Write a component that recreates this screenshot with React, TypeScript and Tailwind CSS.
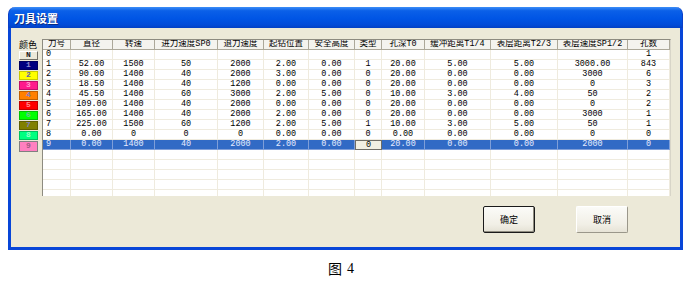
import React from "react";

const COLS =
  "grid grid-cols-[28px_42px_42px_63px_46px_45px_46px_27px_43px_66px_67px_70px_42px]";

const HEADERS = [
  "刀号",
  "直径",
  "转速",
  "进刀速度SP0",
  "退刀速度",
  "起钻位置",
  "安全高度",
  "类型",
  "孔深T0",
  "缓冲距离T1/4",
  "表层距离T2/3",
  "表层速度SP1/2",
  "孔数",
];

const ROWS: string[][] = [
  ["0", "", "", "", "", "", "", "", "", "", "", "", "1"],
  ["1", "52.00", "1500", "50", "2000", "2.00", "0.00", "1", "20.00", "5.00", "5.00", "3000.00", "843"],
  ["2", "90.00", "1400", "40", "2000", "3.00", "0.00", "0", "20.00", "0.00", "0.00", "3000", "6"],
  ["3", "18.50", "1400", "40", "1200", "0.00", "0.00", "0", "20.00", "0.00", "0.00", "0", "3"],
  ["4", "45.50", "1400", "60", "3000", "2.00", "5.00", "0", "10.00", "3.00", "4.00", "50", "2"],
  ["5", "109.00", "1400", "40", "2000", "0.00", "0.00", "0", "20.00", "0.00", "0.00", "0", "2"],
  ["6", "165.00", "1400", "40", "2000", "2.00", "0.00", "0", "20.00", "0.00", "0.00", "3000", "1"],
  ["7", "225.00", "1500", "60", "1200", "2.00", "5.00", "1", "10.00", "3.00", "5.00", "50", "1"],
  ["8", "0.00", "0", "0", "0", "0.00", "0.00", "0", "0.00", "0.00", "0.00", "0", "0"],
];

const SELECTED = ["9", "0.00", "1400", "40", "2000", "2.00", "0.00", "0", "20.00", "0.00", "0.00", "2000", "0"];

const SWATCHES: { label: string; cls: string }[] = [
  { label: "N", cls: "bg-[#ece9d8] text-[#222] border-t-white border-l-white border-b-[#716f64] border-r-[#716f64]" },
  { label: "1", cls: "bg-[#000080] text-[#8c8cd0] border-[#000060]" },
  { label: "2", cls: "bg-[#ffff00] text-[#6060b0] border-[#c8c800]" },
  { label: "3", cls: "bg-[#ff1a8c] text-[#ff9ccc] border-[#c0106a]" },
  { label: "4", cls: "bg-[#ff8000] text-[#7f7fc0] border-[#c06000]" },
  { label: "5", cls: "bg-[#ff0000] text-[#ff8a8a] border-[#c00000]" },
  { label: "6", cls: "bg-[#00ff00] text-[#6fc09f] border-[#00c000]" },
  { label: "7", cls: "bg-[#808000] text-[#8080c0] border-[#606000]" },
  { label: "8", cls: "bg-[#00ff80] text-[#8fffc8] border-[#00c060]" },
];

export default function App() {
  return (
    <div className="w-[692px] h-[292px] bg-white overflow-hidden font-['Liberation_Mono','Noto_Sans_CJK_SC',monospace]">
      {/* Window */}
      <div className="ml-[8px] pt-[7px] w-[675px]">
        {/* Title bar */}
        <div className="h-[21px] rounded-t-[7px] bg-[linear-gradient(180deg,#3d8ef7_0%,#0b60e8_18%,#0055e5_55%,#024bd8_85%,#0340c4_100%)] flex items-center pl-[5px] border-x border-[#0a3fc8]">
          <span className="text-white text-[11px] leading-[12px] font-bold font-['Noto_Sans_CJK_SC',sans-serif] [text-shadow:1px_1px_0_#0a2a80]">
            刀具设置
          </span>
        </div>
        {/* Body */}
        <div className="h-[222px] bg-[#ece9d8] border-x-[3px] border-b-[3px] border-[#0846d8] pt-[11px] pl-[8px]">
          <div className="flex">
            {/* color column */}
            <div className="w-[19px] mr-[4px] flex flex-col">
              <div className="h-[11px] text-[9px] leading-[11px] text-black font-['Noto_Sans_CJK_SC',sans-serif]">
                颜色
              </div>
              {SWATCHES.map((s) => (
                <div key={s.label} className="h-[10px] flex items-center">
                  <div
                    className={
                      "w-[19px] h-[9px] border flex items-center justify-center text-[8px] leading-[8px] font-bold " +
                      s.cls
                    }
                  >
                    {s.label}
                  </div>
                </div>
              ))}
              <div className="h-[12px] flex items-center">
                <div className="w-[19px] h-[11px] border border-[#808080] bg-[#ff80c0] text-[#a05a82] flex items-center justify-center text-[8px] leading-[8px] font-bold">
                  9
                </div>
              </div>
            </div>
            {/* table */}
            <div className="w-[629px] h-[157px] overflow-hidden bg-white border-l border-t border-[#8d8b80] border-r border-r-[#d8d5c8]">
              <div className={COLS + " h-[10px] bg-[#f4f3ee] border-b border-[#aca899]"}>
                {HEADERS.map((h) => (
                  <div
                    key={h}
                    className="border-r border-[#aca899] text-[8.5px] leading-[9px] text-center text-black whitespace-nowrap overflow-hidden"
                  >
                    {h}
                  </div>
                ))}
              </div>
              {ROWS.map((r, i) => (
                <div key={i} className={COLS + " h-[10px] border-b border-[#efebde]"}>
                  {r.map((c, j) => (
                    <div
                      key={j}
                      className={
                        "border-r border-[#efebde] text-[8.5px] leading-[9px] text-black whitespace-nowrap " +
                        (j === 0 ? "text-left pl-[3px]" : "text-center")
                      }
                    >
                      {c}
                    </div>
                  ))}
                </div>
              ))}
              <div className={COLS + " h-[10px] bg-[#316ac5] border-b border-[#7f9ed8]"}>
                {SELECTED.map((c, j) =>
                  j === 7 ? (
                    <div
                      key={j}
                      className="bg-[#f1efe3] border border-[#6f6d66] text-[8.5px] leading-[8px] text-black text-center"
                    >
                      {c}
                    </div>
                  ) : (
                    <div
                      key={j}
                      className={
                        "border-r border-[#7f9ed8] text-[8.5px] leading-[9px] text-[#e6ecff] whitespace-nowrap " +
                        (j === 0 ? "text-left pl-[3px]" : "text-center")
                      }
                    >
                      {c}
                    </div>
                  )
                )}
              </div>
              {[0, 1, 2, 3, 4].map((i) => (
                <div key={i} className={COLS + " h-[10px] border-b border-[#efebde]"}>
                  {HEADERS.map((h) => (
                    <div key={h} className="border-r border-[#efebde]" />
                  ))}
                </div>
              ))}
            </div>
          </div>
          {/* buttons */}
          <div className="mt-[10px] flex justify-end gap-[41px] pr-[52px]">
            <div className="w-[52px] h-[27px] border border-[#1a1a1a] rounded-[2px] bg-[linear-gradient(180deg,#fbfbf8_0%,#f1efe6_70%,#e4e1d4_100%)] shadow-[inset_-1px_-1px_0_#8f8c80] flex items-center justify-center text-[9px] text-black font-['Noto_Sans_CJK_SC',sans-serif]">
              确定
            </div>
            <div className="w-[52px] h-[27px] border border-t-white border-l-white border-b-[#9a978a] border-r-[#9a978a] rounded-[2px] bg-[linear-gradient(180deg,#fbfbf8_0%,#f1efe6_70%,#e6e3d6_100%)] flex items-center justify-center text-[9px] text-black font-['Noto_Sans_CJK_SC',sans-serif]">
              取消
            </div>
          </div>
        </div>
      </div>
      {/* caption */}
      <div className="mt-[11px] pl-[328px] flex items-center gap-[5px] text-[14px] leading-[15px] text-black">
        <span className="font-['Noto_Sans_CJK_SC',sans-serif]">图</span>
        <span className="font-['Liberation_Serif',serif]">4</span>
      </div>
    </div>
  );
}
